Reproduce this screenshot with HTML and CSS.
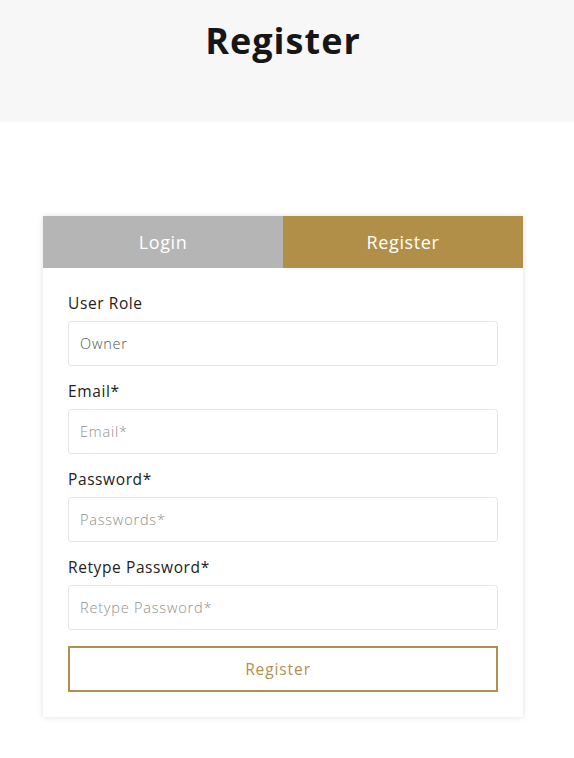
FILE: index.html
```html
<!DOCTYPE html>
<html lang="en">
<head>
<meta charset="utf-8">
<title>Register</title>
<link rel="stylesheet" href="styles.css">
</head>
<body>
<header class="page-head">
  <h1 class="page-title">Register</h1>
</header>
<main class="main">
  <section class="card">
    <div class="tabs">
      <div class="tab tab-login">Login</div>
      <div class="tab tab-active">Register</div>
    </div>
    <form class="form">
      <div class="field">
        <label class="label">User Role</label>
        <input class="input" type="text" value="Owner" readonly>
      </div>
      <div class="field">
        <label class="label">Email*</label>
        <input class="input" type="text" placeholder="Email*">
      </div>
      <div class="field">
        <label class="label">Password*</label>
        <input class="input" type="password" placeholder="Passwords*">
      </div>
      <div class="field">
        <label class="label">Retype Password*</label>
        <input class="input" type="password" placeholder="Retype Password*">
      </div>
      <button class="btn" type="button">Register</button>
    </form>
  </section>
</main>
</body>
</html>
```
FILE: styles.css
```css
* { box-sizing: border-box; }
body {
  margin: 0;
  background: #fff;
  font-family: "Open Sans", "Liberation Sans", sans-serif;
  color: #222;
}
.page-head {
  background: #f7f7f7;
  height: 122px;
  padding-top: 18px;
}
.page-title {
  margin: 0;
  text-align: center;
  font-size: 36px;
  font-weight: 700;
  line-height: 46px;
  letter-spacing: 1px;
  color: #161616;
  padding-right: 8px;
}
.main {
  padding-top: 94px;
  padding-bottom: 40px;
  display: flex;
  justify-content: center;
  padding-right: 8px;
}
.card {
  width: 480px;
  background: #fff;
  box-shadow: 0 0 6px rgba(0,0,0,0.13);
}
.tabs {
  display: flex;
  height: 52px;
}
.tab {
  flex: 1;
  display: flex;
  align-items: center;
  justify-content: center;
  font-size: 18px;
  font-weight: 500;
  letter-spacing: 0.6px;
  color: #fff;
}
.tab-login { background: #b5b5b5; }
.tab-active { background: #b28f48; }
.form {
  padding: 24px 25px 25px;
  display: flex;
  flex-direction: column;
}
.field {
  display: flex;
  flex-direction: column;
  margin-bottom: 14px;
}
.label {
  font-size: 15.5px;
  font-weight: 500;
  line-height: 22px;
  letter-spacing: 0.6px;
  color: #222;
  margin-bottom: 7px;
}
.input {
  height: 45px;
  border: 1px solid #e6e6e6;
  border-radius: 3px;
  padding: 0 11px;
  font-family: inherit;
  font-size: 14.5px;
  font-weight: 300;
  letter-spacing: 0.8px;
  color: #555;
  outline: none;
}
.input::placeholder { color: #8f8f8f; font-weight: 300; }
.btn {
  margin-top: 2px;
  height: 46px;
  padding: 0 10px 0 0;
  background: #fff;
  border: 2px solid #b08f4f;
  font-family: inherit;
  font-size: 15.5px;
  font-weight: 400;
  letter-spacing: 0.9px;
  color: #b08f4f;
  cursor: pointer;
}
```
